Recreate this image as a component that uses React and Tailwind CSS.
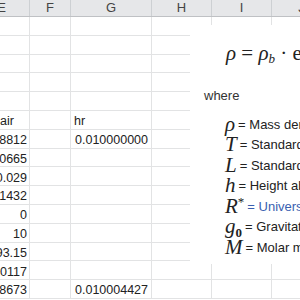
const cols = [
    { key: 'E', w: 'w-[56px]' },
    { key: 'F', w: 'w-[41px]' },
    { key: 'G', w: 'w-[81px]' },
    { key: 'H', w: 'w-[60px]' },
    { key: 'I', w: 'w-[60px]' },
    { key: 'J', w: 'w-[60px]' },
];

// E value (right aligned), G value
const rows = [
    ['', ''],
    ['', ''],
    ['', ''],
    ['', ''],
    ['', ''],
    ['air', 'hr'],
    ['1.2258812', '0.010000000'],
    ['9.80665', ''],
    ['0.029', ''],
    ['8.31432', ''],
    ['0', ''],
    ['10', ''],
    ['293.15', ''],
    ['1.20117', ''],
    ['1.2238673', '0.010004427'],
];

const legend = [
    { sym: <i>ρ</i>, text: 'Mass density' },
    { sym: <i>T</i>, text: 'Standard temperature' },
    { sym: <i>L</i>, text: 'Standard lapse rate' },
    { sym: <i>h</i>, text: 'Height above sea level' },
    { sym: <span><i>R</i><sup className="text-[13px]">*</sup></span>, text: 'Universal gas constant', link: true },
    { sym: <span><i>g</i><sub className="text-[13px] not-italic font-bold">0</sub></span>, text: 'Gravitational acceleration' },
    { sym: <i>M</i>, text: 'Molar mass of air' },
];

const App = () => {
    return (
        <div className="relative w-[300px] h-[300px] overflow-hidden bg-white font-['Liberation_Sans',sans-serif] text-[#222]">
            {/* column header */}
            <div className="flex -ml-[26px] h-[17px] bg-[#e6e7e9] border-b border-[#bfc1c4]">
                {cols.map((c) => (
                    <div key={c.key} className={`${c.w} shrink-0 flex items-center justify-center border-r border-[#cdd0d3] text-[13px] text-[#444]`}>
                        {c.key}
                    </div>
                ))}
            </div>

            {/* grid rows */}
            {rows.map((r, i) => (
                <div key={i} className="flex -ml-[26px] h-[18.8px]">
                    <div className="w-[56px] shrink-0 flex items-end justify-end pr-[2px] pb-[1px] border-r border-b border-[#e2e3e4] text-[12.5px] leading-none whitespace-nowrap overflow-visible">
                        {r[0] === 'air' ? <span className="w-full pl-[26px] text-left">air</span> : r[0]}
                    </div>
                    <div className="w-[41px] shrink-0 border-r border-b border-[#e2e3e4]" />
                    <div className={`w-[81px] shrink-0 flex items-end pb-[1px] border-r border-b border-[#e2e3e4] text-[12.5px] leading-none ${r[1] === 'hr' ? 'justify-start pl-[3px]' : 'justify-end pr-[3px]'}`}>
                        {r[1]}
                    </div>
                    <div className="w-[60px] shrink-0 border-r border-b border-[#e2e3e4]" />
                    <div className="w-[60px] shrink-0 border-r border-b border-[#e2e3e4]" />
                    <div className="w-[60px] shrink-0 border-r border-b border-[#e2e3e4]" />
                </div>
            ))}

            {/* pasted formula picture */}
            <div className="absolute left-[190px] top-[25px] w-[130px] h-[239px] bg-white overflow-hidden">
                <div className="pl-[36px] pt-[18px] h-[26px] whitespace-nowrap font-['Liberation_Serif',serif] text-[21px] leading-none text-[#222]">
                    <i>ρ</i> = <i>ρ</i><sub className="text-[13px]"><i>b</i></sub> · exp[−g<sub>0</sub>M(h−h<sub>b</sub>)/R*T<sub>b</sub>]
                </div>
                <div className="pl-[14px] mt-[38px] text-[13px] leading-none text-[#333]">where</div>
                <div className="mt-[12px] pl-[35px] flex flex-col">
                    {legend.map((l, i) => (
                        <div key={i} className="h-[20.5px] flex items-center whitespace-nowrap">
                            <span className="font-['Liberation_Serif',serif] text-[21px] leading-none text-[#222]">{l.sym}</span>
                            <span className={`ml-[3px] text-[13px] leading-none ${l.link ? 'text-[#3a5fb0]' : 'text-[#222]'}`}>
                                = {l.text}
                            </span>
                        </div>
                    ))}
                </div>
            </div>
        </div>
    );
};

export default App;
